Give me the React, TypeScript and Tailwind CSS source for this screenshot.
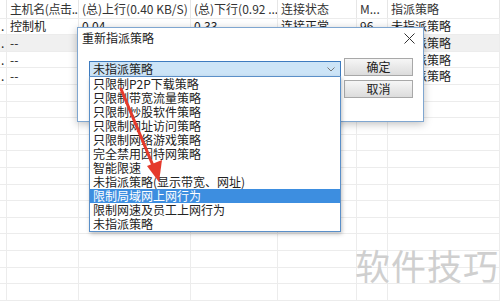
import React from "react";

const cols = ["w-[7px]", "w-[72px]", "w-[112px]", "w-[87px]", "w-[79px]", "w-[31px]", "flex-1"];

const header = ["", "主机名(点击...", "(总)上行(0.40 KB/S)", "(总)下行(0.92 ...", "连接状态", "M...", "指派策略"];
const rows: string[][] = [
  [".", "控制机", "0.04", "0.33", "连接正常", "96", "未指派策略"],
  [".", "--", "", "", "", "", "未指派策略"],
  [".", "--", "", "", "", "", "未指派策略"],
  [".", "--", "", "", "", "", "未指派策略"],
];

const items = [
  "只限制P2P下载策略",
  "只限制带宽流量策略",
  "只限制炒股软件策略",
  "只限制网址访问策略",
  "只限制网络游戏策略",
  "完全禁用因特网策略",
  "智能限速",
  "未指派策略(显示带宽、网址)",
  "限制局域网上网行为",
  "限制网速及员工上网行为",
  "未指派策略",
];

const font = { fontFamily: '"Noto Sans CJK SC", "Noto Sans", sans-serif' };

export default function App() {
  const empty = Array.from({ length: 13 });
  return (
    <div className="relative w-[500px] h-[304px] overflow-hidden bg-white text-[12px] text-[#222]" style={font}>
      <div className="flex h-[18.6px] items-center border-b border-[#ececec]">
        {header.map((h, i) => (
          <div key={i} className={`${cols[i]} h-full flex items-center border-r border-[#e6e6e6] ${i === 1 ? "pl-[3px] tracking-[-0.4px]" : "pl-[3px]"} whitespace-nowrap overflow-hidden text-[#333] leading-none`}>
            {h}
          </div>
        ))}
      </div>
      {rows.map((r, ri) => (
        <div key={ri} className={`flex h-[16.6px] items-center border-b border-[#ececec] ${ri === 1 ? "bg-[#f0f0f0]" : ""}`}>
          {r.map((c, i) => (
            <div key={i} className={`${cols[i]} h-full flex items-center border-r border-[#ececec] ${i === 0 ? "pl-[1px]" : "pl-[3px]"} whitespace-nowrap overflow-hidden leading-none`}>
              {c}
            </div>
          ))}
        </div>
      ))}
      {empty.map((_, ri) => (
        <div key={ri} className="flex h-[16.6px] border-b border-[#ececec]">
          {cols.map((c, i) => (
            <div key={i} className={`${c} h-full border-r border-[#ececec]`} />
          ))}
        </div>
      ))}

      {/* Dialog */}
      <div className="absolute left-[77px] top-[27px] w-[347px] h-[95px] bg-white border border-[#7fa6d0] shadow-[0_2px_8px_rgba(0,0,0,0.25)]">
        <div className="flex items-center justify-between h-[20px] pl-[4px] pr-[8px]">
          <span className="leading-none">重新指派策略</span>
          <svg width="11" height="11" viewBox="0 0 11 11" className="mt-[1px]">
            <path d="M0.5 0.5 L10.5 10.5 M10.5 0.5 L0.5 10.5" stroke="#333" strokeWidth="1" />
          </svg>
        </div>
        <div className="flex flex-col gap-[4px] absolute left-[266px] top-[30px]">
          <div className="w-[69px] h-[18px] flex items-center justify-center border border-[#a8a8a8] bg-gradient-to-b from-[#f6f6f6] to-[#dcdcdc] leading-none">确定</div>
          <div className="w-[69px] h-[18px] flex items-center justify-center border border-[#a8a8a8] bg-gradient-to-b from-[#f6f6f6] to-[#dcdcdc] leading-none">取消</div>
        </div>
      </div>

      {/* Select */}
      <div className="absolute left-[89px] top-[61px] w-[252px] h-[16px] bg-[#cce4f7] border border-[#3d7bbf] flex items-center justify-between pl-[3px] pr-[5px]">
        <span className="leading-none">未指派策略</span>
        <svg width="8" height="5" viewBox="0 0 8 5">
          <path d="M0.5 0.5 L4 4 L7.5 0.5" stroke="#777" fill="none" strokeWidth="1" />
        </svg>
      </div>
      <div className="absolute left-[89px] top-[76px] w-[252px] bg-white border border-[#5a8fc8] shadow-[1px_2px_4px_rgba(0,0,0,0.25)]">
        {items.map((it, i) => (
          <div key={i} className={`h-[14px] flex items-center pl-[3px] leading-none whitespace-nowrap ${i === 8 ? "bg-[#3d8ee0] text-white" : ""}`}>
            {it}
          </div>
        ))}
      </div>

      {/* Red arrow */}
      <svg className="absolute left-0 top-0" width="500" height="304" viewBox="0 0 500 304">
        <line x1="121" y1="89" x2="154" y2="168" stroke="#e53a2c" strokeWidth="3" strokeLinecap="round" />
        <polygon points="159,182 147,166 162,160" fill="#e53a2c" />
      </svg>

      {/* Watermark */}
      <div className="absolute left-[355px] top-[247px] text-[35px] leading-none text-[#cfcfcf] tracking-[1px]">软件技巧</div>
    </div>
  );
}
